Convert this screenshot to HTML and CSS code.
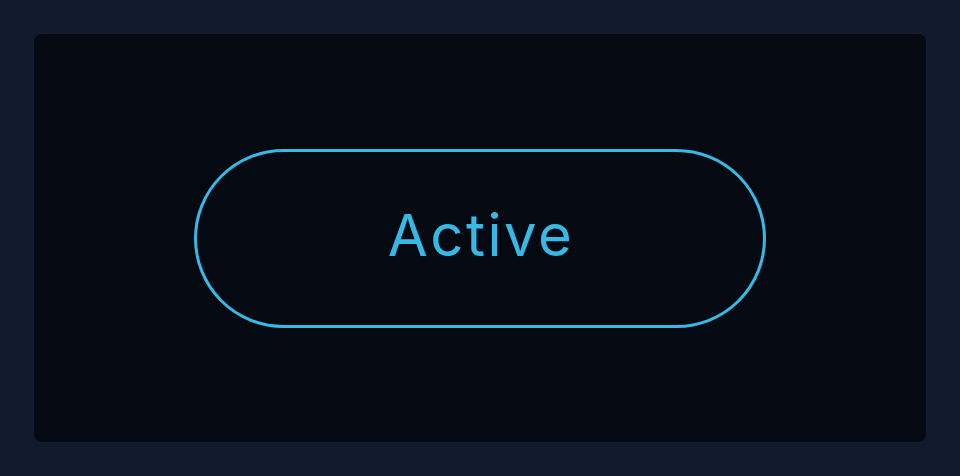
FILE: index.html
```html
<!DOCTYPE html>
<html lang="en">
<head>
    <meta charset="UTF-8">
    <meta name="viewport" content="width=device-width, initial-scale=1.0">
    <title>Status Button</title>
    <link rel="stylesheet" href="styles.css">
</head>
<body>
    <main class="stage">
        <button class="pill-button" type="button">Active</button>
    </main>
</body>
</html>
```

FILE: styles.css
```css
body {
    margin: 0;
    padding: 34px;
    background-color: #121b2d;
    font-family: Inter, "Open Sans", sans-serif;
}

.stage {
    height: 408px;
    background-color: #050a12;
    border-radius: 8px;
    display: flex;
    align-items: center;
    justify-content: center;
}

.pill-button {
    box-sizing: border-box;
    width: 572px;
    height: 179px;
    padding: 0 0 6px 2px;
    border: 3px solid #37b9e6;
    border-radius: 999px;
    background: transparent;
    color: #37b9e6;
    font-family: inherit;
    font-size: 58px;
    font-weight: 400;
    letter-spacing: 2.5px;
    cursor: pointer;
}
```
